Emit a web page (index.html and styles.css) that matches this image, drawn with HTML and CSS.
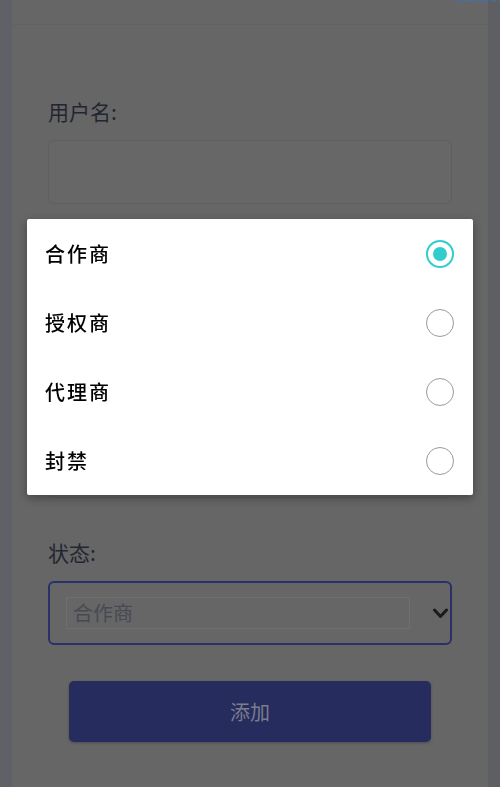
FILE: index.html
```html
<!DOCTYPE html>
<html lang="zh">
<head>
<meta charset="utf-8">
<title>添加用户</title>
<link rel="stylesheet" href="styles.css">
</head>
<body>
<div class="app">
  <div class="edge edge-left"></div>
  <main class="main">
    <header class="topbar"></header>
    <form class="form">
      <div class="field">
        <label class="label">用户名:</label>
        <div class="input"></div>
      </div>
      <div class="field">
        <label class="label"></label>
        <div class="input"></div>
      </div>
      <div class="field">
        <label class="label"></label>
        <div class="input"></div>
      </div>
      <div class="field">
        <label class="label">状态:</label>
        <div class="select">
          <div class="select-box">合作商</div>
          <svg class="chevron" width="15" height="11" viewBox="0 0 15 11"><polyline points="1.5,2 7.5,8.5 13.5,2" fill="none" stroke="#1b1b1b" stroke-width="3" stroke-linecap="round" stroke-linejoin="round"/></svg>
        </div>
      </div>
      <div class="actions">
        <div class="btn">添加</div>
      </div>
    </form>
  </main>
  <div class="edge edge-right"></div>
  <span class="corner-link">退出登录</span>
</div>

<div class="dialog">
  <div class="option"><span class="opt-text">合作商</span><span class="radio radio-on"><span class="dot"></span></span></div>
  <div class="option"><span class="opt-text">授权商</span><span class="radio"></span></div>
  <div class="option"><span class="opt-text">代理商</span><span class="radio"></span></div>
  <div class="option"><span class="opt-text">封禁</span><span class="radio"></span></div>
</div>
</body>
</html>
```

FILE: styles.css
```css
* { box-sizing: border-box; }
html, body {
  margin: 0;
  padding: 0;
  height: 100%;
}
body {
  background: #666666;
  font-family: "Noto Sans CJK SC", "Noto Sans", sans-serif;
  overflow: hidden;
}
.app {
  position: relative;
  display: flex;
  height: 787px;
}
.edge {
  width: 12px;
  flex: none;
}
.edge-left { background: #606166; }
.edge-right { background: #5e5f63; }
.main {
  flex: 1;
  display: flex;
  flex-direction: column;
  background: #666666;
}
.topbar {
  height: 25px;
  border-bottom: 1px solid #626262;
}
.form {
  padding: 71px 36px 0 36px;
  display: flex;
  flex-direction: column;
  gap: 39px;
}
.field {
  display: flex;
  flex-direction: column;
  gap: 14px;
}
.label {
  display: block;
  min-height: 30px;
  font-size: 21px;
  line-height: 30px;
  color: #232632;
}
.input {
  height: 64px;
  border: 1px solid #5f5f5f;
  border-radius: 6px;
  background: #676767;
}
.select {
  height: 64px;
  border: 2px solid #2a3068;
  border-radius: 6px;
  display: flex;
  align-items: center;
  padding: 0 1px 0 16px;
}
.select-box {
  width: 344px;
  height: 32px;
  border: 1px solid #6f6f6f;
  padding-left: 6px;
  font-size: 20px;
  line-height: 30px;
  color: #474a52;
}
.chevron {
  margin-left: 23px;
  flex: none;
}
.actions {
  padding: 0 21px;
  margin-top: -3px;
}
.btn {
  height: 61px;
  border-radius: 5px;
  background: #262d5e;
  box-shadow: 0 1px 3px rgba(0,0,0,0.25);
  color: #7b7d8c;
  font-size: 20px;
  display: flex;
  align-items: center;
  justify-content: center;
}
.corner-link {
  position: absolute;
  top: -11px;
  right: -2px;
  font-size: 12px;
  line-height: 14px;
  color: #3f70b2;
}
.dialog {
  position: fixed;
  left: 27px;
  top: 219px;
  width: 446px;
  background: #ffffff;
  border-radius: 2px;
  box-shadow: 0 3px 10px rgba(0,0,0,0.35);
  display: flex;
  flex-direction: column;
}
.option {
  height: 69px;
  display: flex;
  align-items: center;
  justify-content: space-between;
  padding: 0 19px 0 18px;
}
.opt-text {
  font-size: 20px;
  font-weight: 500;
  letter-spacing: 2px;
  color: #000000;
}
.radio {
  width: 28px;
  height: 28px;
  border-radius: 50%;
  border: 1.5px solid #9a9a9a;
  display: flex;
  align-items: center;
  justify-content: center;
}
.radio-on {
  border: 2px solid #33cccc;
}
.dot {
  width: 14px;
  height: 14px;
  border-radius: 50%;
  background: #33cccc;
}
```
